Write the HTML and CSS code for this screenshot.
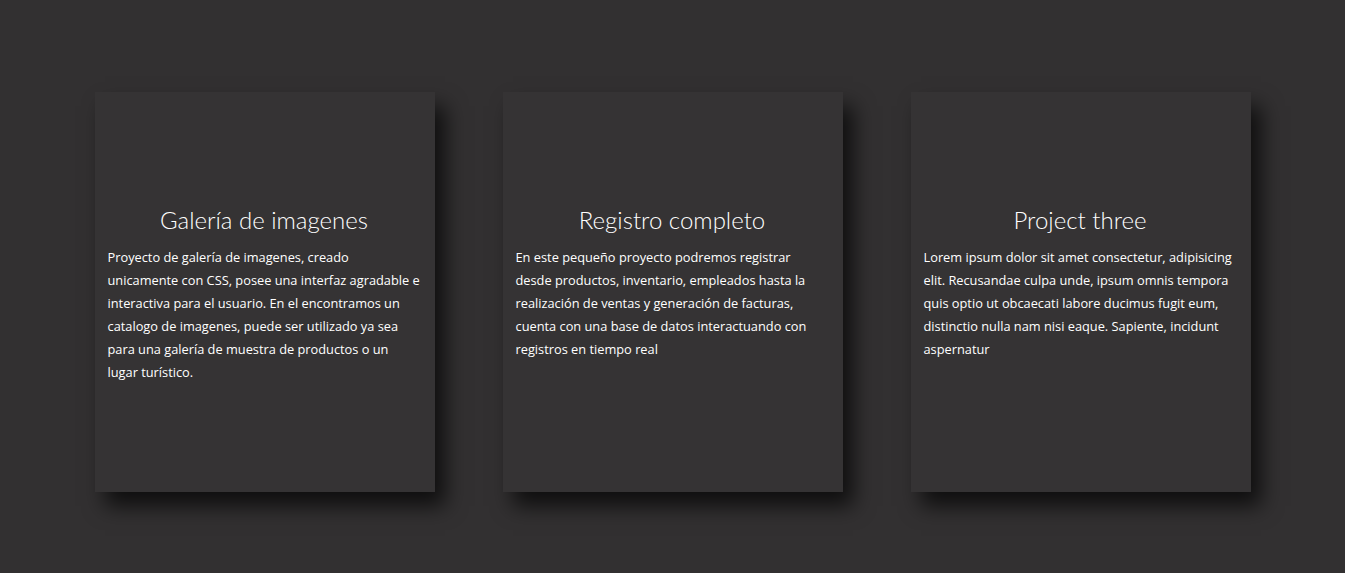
FILE: index.html
```html
<!DOCTYPE html>
<html lang="es">
<head>
<meta charset="utf-8">
<link rel="stylesheet" href="styles.css">
</head>
<body>
<main class="cards">
  <article class="card">
    <h2 class="card-title">Galería de imagenes</h2>
    <p class="card-text">Proyecto de galería de imagenes, creado unicamente con CSS, posee una interfaz agradable e interactiva para el usuario. En el encontramos un catalogo de imagenes, puede ser utilizado ya sea para una galería de muestra de productos o un lugar turístico.</p>
  </article>
  <article class="card">
    <h2 class="card-title">Registro completo</h2>
    <p class="card-text">En este pequeño proyecto podremos registrar desde productos, inventario, empleados hasta la realización de ventas y generación de facturas, cuenta con una base de datos interactuando con registros en tiempo real</p>
  </article>
  <article class="card">
    <h2 class="card-title">Project three</h2>
    <p class="card-text">Lorem ipsum dolor sit amet consectetur, adipisicing elit. Recusandae culpa unde, ipsum omnis tempora quis optio ut obcaecati labore ducimus fugit eum, distinctio nulla nam nisi eaque. Sapiente, incidunt aspernatur</p>
  </article>
</main>
</body>
</html>
```

FILE: styles.css
```css
html, body {
  margin: 0;
  padding: 0;
  background: #323031;
  height: 100%;
}
body {
  font-family: "Open Sans", "Liberation Sans", sans-serif;
  color: #fff;
}
.cards {
  display: flex;
  justify-content: center;
  gap: 68px;
  padding-top: 92px;
}
.card {
  width: 340px;
  height: 400px;
  box-sizing: border-box;
  padding: 112px 14px 0 13px;
  background: #353334;
  box-shadow: 10px 14px 20px rgba(0, 0, 0, 0.7);
}
.card-title {
  margin: 0 0 10px;
  font-family: Lato, "Noto Sans", sans-serif;
  font-weight: 300;
  font-size: 24px;
  line-height: 32px;
  text-align: center;
  color: #fff;
}
.card-text {
  margin: 0;
  font-size: 12.8px;
  line-height: 23px;
  color: #fff;
}
```
